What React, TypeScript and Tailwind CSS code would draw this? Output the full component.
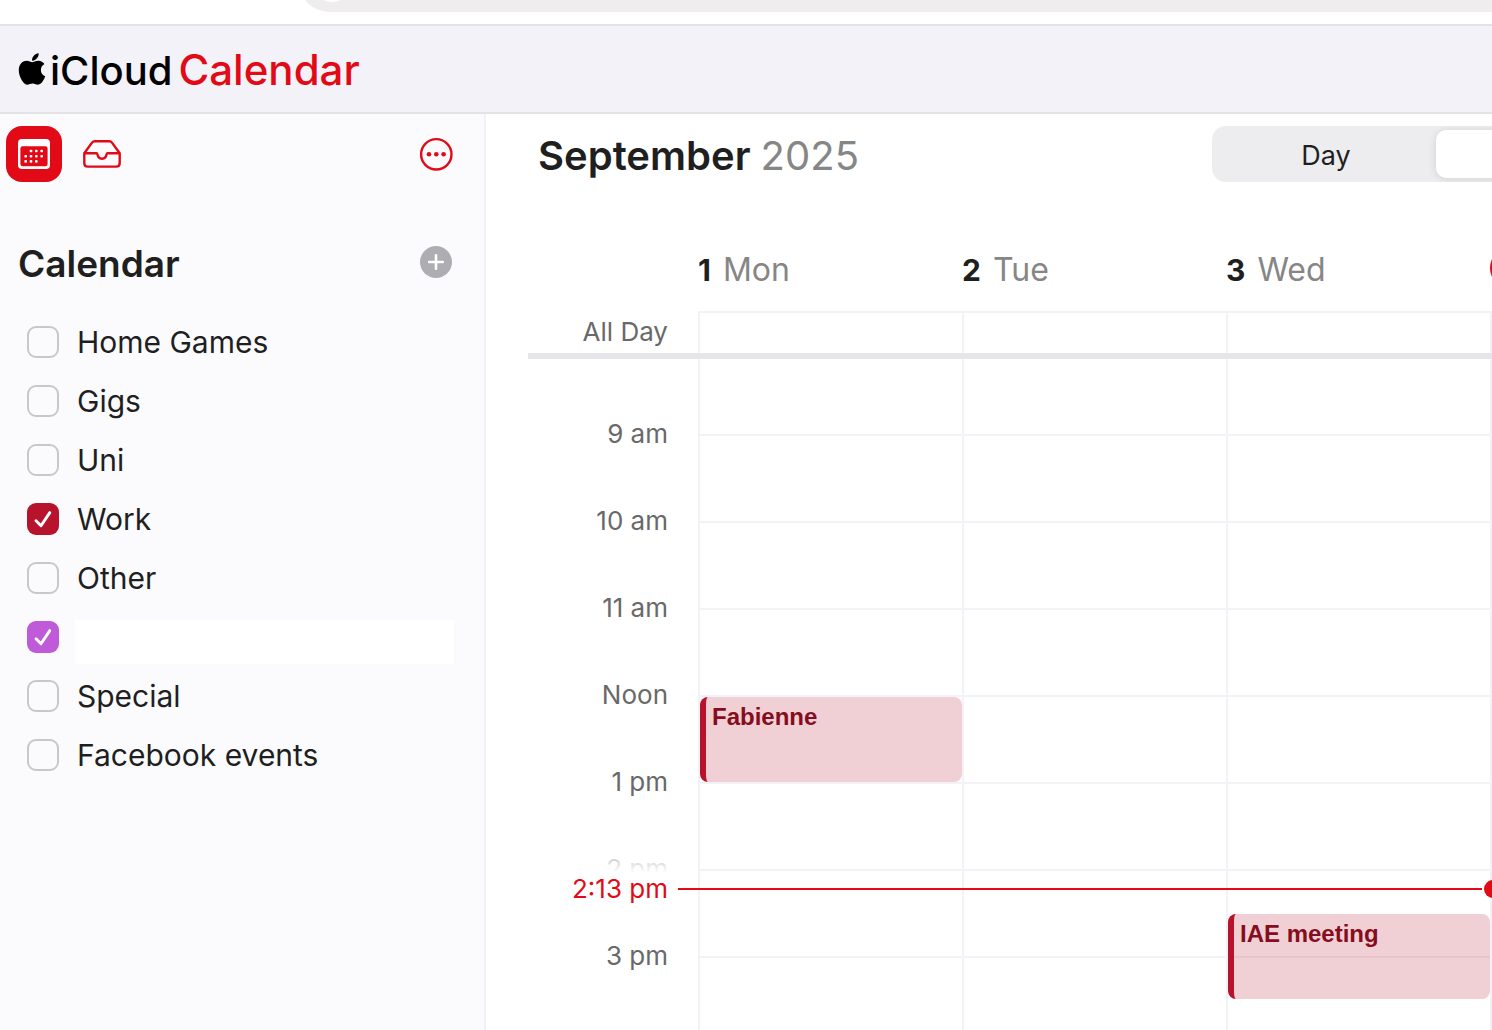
import { useState } from 'react'
import { FaApple } from 'react-icons/fa'

const HOUR_HEIGHT = 87
const FIRST_LINE = 75
const FIRST_HOUR = 9

const HOURS = ['9 am', '10 am', '11 am', 'Noon', '1 pm', '2 pm', '3 pm']

const CALENDARS = [
  { id: 'home-games', name: 'Home Games', checked: false, color: 'checked:bg-[#b8132d]' },
  { id: 'gigs', name: 'Gigs', checked: false, color: 'checked:bg-[#b8132d]' },
  { id: 'uni', name: 'Uni', checked: false, color: 'checked:bg-[#b8132d]' },
  { id: 'work', name: 'Work', checked: true, color: 'checked:bg-[#b8132d]' },
  { id: 'other', name: 'Other', checked: false, color: 'checked:bg-[#b8132d]' },
  { id: 'unnamed', name: '', checked: true, color: 'checked:bg-[#bf5ad8]' },
  { id: 'special', name: 'Special', checked: false, color: 'checked:bg-[#b8132d]' },
  { id: 'facebook', name: 'Facebook events', checked: false, color: 'checked:bg-[#b8132d]' },
]

const DAYS = [
  { date: 1, name: 'Mon', events: [{ title: 'Fabienne', start: 12, hours: 1 }] },
  { date: 2, name: 'Tue', events: [] },
  { date: 3, name: 'Wed', events: [{ title: 'IAE meeting', start: 14.5, hours: 1 }] },
]

const NOW = 14 + 13 / 60

const hourToY = (hour: number) => FIRST_LINE + (hour - FIRST_HOUR) * HOUR_HEIGHT

function CalendarIcon() {
  return (
    <svg width="32" height="30" viewBox="0 0 32 30" aria-hidden="true">
      <rect width="32" height="30" rx="4" fill="#fff" />
      <rect x="2.4" y="7.3" width="27.2" height="19.9" rx="2.2" fill="#e20a17" />
      <g fill="#fff">
        {[[13, 12], [18.3, 12], [23.7, 12], [7.7, 17.2], [13, 17.2], [18.3, 17.2], [23.7, 17.2], [7.7, 22.4], [13, 22.4], [18.3, 22.4]].map(([x, y]) => (
          <rect key={`${x}-${y}`} x={x - 1.3} y={y - 1.3} width="2.6" height="2.6" rx="0.8" />
        ))}
      </g>
    </svg>
  )
}

function InboxIcon() {
  return (
    <svg width="38" height="28" viewBox="0 0 38 28" fill="none" stroke="#e20a17" strokeWidth="2.4" strokeLinejoin="round" aria-hidden="true">
      <path d="M1.3 13.2 9 2.6C9.8 1.5 10.6 1.2 11.8 1.2H26.2C27.4 1.2 28.2 1.5 29 2.6L36.7 13.2V23.2C36.7 25.4 35.4 26.6 33.2 26.6H4.8C2.6 26.6 1.3 25.4 1.3 23.2Z" />
      <path d="M1.3 13.3H13.4C14 13.3 14.3 13.6 14.4 14.2C14.8 17 16.6 18.7 19 18.7S23.2 17 23.6 14.2C23.7 13.6 24 13.3 24.6 13.3H36.7" />
    </svg>
  )
}

function Sidebar() {
  const [calendars, setCalendars] = useState(CALENDARS)
  const toggle = (id: string) =>
    setCalendars(calendars.map((c) => (c.id === id ? { ...c, checked: !c.checked } : c)))

  return (
    <aside className="w-[486px] shrink-0 border-r-2 border-[#f2f2f6] bg-[#fbfbfe] pt-3">
      <div className="flex items-center gap-3 pl-1.5 pr-8">
        <button aria-label="Calendar" className="flex size-14 items-center justify-center rounded-2xl bg-[#e20a17]">
          <CalendarIcon />
        </button>
        <button aria-label="Inbox" className="flex size-14 items-center justify-center">
          <InboxIcon />
        </button>
        <button aria-label="More options" className="ml-auto">
          <svg width="32" height="32" viewBox="0 0 32 32" className="overflow-visible" aria-hidden="true">
            <circle cx="16.3" cy="16.3" r="15.2" fill="none" stroke="#e20a17" strokeWidth="2.4" />
            <g fill="#e20a17">
              <circle cx="9" cy="16.3" r="2.3" />
              <circle cx="16.3" cy="16.3" r="2.3" />
              <circle cx="23.6" cy="16.3" r="2.3" />
            </g>
          </svg>
        </button>
      </div>
      <div className="mt-16 flex h-8 items-center justify-between pl-[18px] pr-8">
        <h2 className="pt-1 text-[37px] font-semibold leading-8 text-[#1f1f1f]">Calendar</h2>
        <button aria-label="Add calendar">
          <svg width="32" height="32" viewBox="0 0 32 32" aria-hidden="true">
            <circle cx="16" cy="16" r="16" fill="#aeaeb2" />
            <path d="M16 9.2V22.8M9.2 16H22.8" stroke="#fff" strokeWidth="2.6" strokeLinecap="round" />
          </svg>
        </button>
      </div>
      <ul className="pl-[27px] pr-[30px] pt-[34px]">
        {calendars.map((c) => (
          <li key={c.id} className="flex h-[59px] items-center">
            <span className="relative size-8 shrink-0">
              <input id={c.id} type="checkbox" checked={c.checked} onChange={() => toggle(c.id)} aria-label={c.name || 'Calendar'}
                className={`size-8 appearance-none rounded-[9px] border-2 border-[#c8c8cb] checked:border-0 ${c.color}`} />
              {c.checked && (
                <svg viewBox="0 0 32 32" className="pointer-events-none absolute inset-0" fill="none" stroke="#fff" strokeWidth="2.9" strokeLinecap="round" strokeLinejoin="round" aria-hidden="true">
                  <path d="M9 17.8 14 22.8 22.8 9.6" />
                </svg>
              )}
            </span>
            {c.name ? (
              <label htmlFor={c.id} className="pl-[18px] pt-0.5 text-[30px] text-[#1f1f1f]">{c.name}</label>
            ) : (
              <label htmlFor={c.id} className="mb-0.5 ml-4 h-11 flex-1 self-end bg-white" />
            )}
          </li>
        ))}
      </ul>
    </aside>
  )
}

function WeekGrid() {
  return (
    <div className="flex min-h-0 flex-1 flex-col pl-[42px] pt-10">
      <div className="grid grid-cols-[170px_1fr_1fr_1fr_2px]">
        <div />
        {DAYS.map((day) => (
          <div key={day.date} className="flex h-[85px] items-baseline gap-3 pt-[19px] text-[32px] leading-[50px] text-[#868686]">
            <span className="text-[30px] font-bold text-[#1f1f1f]">{day.date}</span>
            {day.name}
          </div>
        ))}
        <div className="relative">
          <span className="absolute left-0 top-[22px] size-10 rounded-full bg-[#e20a17]" />
        </div>
      </div>
      <div className="grid h-[42px] grid-cols-[170px_1fr_1fr_1fr_2px] text-[26px] leading-[42px]">
        <div className="pr-[30px] text-right text-[#696969]">All Day</div>
        {DAYS.map((day) => (
          <div key={day.date} className="border-l-2 border-t-2 border-[#f2f2f7]" />
        ))}
        <div className="bg-[#f2f2f7]" />
      </div>
      <div className="h-1.5 shrink-0 bg-[#e5e5ea]" />
      <div className="relative grid min-h-0 flex-1 grid-cols-[170px_1fr_1fr_1fr_2px] overflow-hidden">
        <div className="pr-[30px] pt-[31px] text-right text-[26px] text-[#696969]">
          {HOURS.map((hour) => (
            <div key={hour} className="h-[87px] leading-[87px]">{hour}</div>
          ))}
        </div>
        {DAYS.map((day) => (
          <div key={day.date} className="relative border-l-2 border-[#f2f2f7] pt-[75px]">
            {HOURS.map((hour) => (
              <div key={hour} className="h-[87px] border-t-2 border-[#f2f2f7]" />
            ))}
            {day.events.map((event) => (
              <button key={event.title}
                className="absolute inset-x-0 flex items-start overflow-hidden rounded-lg border-l-[6px] border-[#b8132d] bg-[#b8132d]/20 bg-clip-padding px-1.5 pt-1 text-left font-['Liberation_Sans',sans-serif] text-2xl font-bold text-[#860c20]"
                style={{ top: Math.floor(hourToY(event.start)) + 2, height: event.hours * HOUR_HEIGHT - 2 }}>
                {event.title}
              </button>
            ))}
          </div>
        ))}
        <div className="bg-[#f2f2f7]" />
        <div className="absolute inset-x-0 flex h-0.5 items-center" style={{ top: Math.round(hourToY(NOW)) }}>
          <div className="w-[140px] shrink-0 bg-linear-to-b from-white/65 from-0% via-white via-25% to-white py-4 text-right text-[26px] leading-8 text-[#e20a17]">2:13 pm</div>
          <div className="ml-2.5 h-0.5 flex-1 bg-[#e20a17]" />
          <div className="-mr-2.5 ml-0.5 size-[18px] shrink-0 rounded-full bg-[#e20a17]" />
        </div>
      </div>
    </div>
  )
}

export default function App() {
  return (
    <div className="flex h-screen flex-col overflow-hidden bg-white font-[Inter,'Liberation_Sans',sans-serif]">
      <div className="flex h-6 shrink-0 items-end overflow-hidden pb-3 pl-[298px]">
        <div className="flex h-16 flex-1 items-center rounded-l-full bg-[#efedee] pl-3">
          <span className="size-11 rounded-full bg-white" />
        </div>
      </div>
      <header className="flex h-[90px] shrink-0 items-center border-y-2 border-[#e3e3e6] bg-[#f3f2f8] pl-3.5">
        <a href="#" className="flex items-center font-medium text-black">
          <FaApple className="size-9" aria-hidden="true" />
          <span className="flex items-baseline gap-1.5">
            <span className="text-[40px]">iCloud</span>
            <span className="text-[42px] text-[#e20a17]">Calendar</span>
          </span>
        </a>
      </header>
      <div className="flex min-h-0 flex-1">
        <Sidebar />
        <main className="flex min-w-0 flex-1 flex-col overflow-hidden">
          <div className="flex justify-between pl-[52px] pt-3">
            <h1 className="text-[40px] font-semibold leading-[60px] text-[#1f1f1f]">
              September <span className="font-normal text-[#868686]">2025</span>
            </h1>
            <div className="flex h-14 w-[280px] overflow-hidden rounded-l-[14px] bg-[#ededef] text-[27px] text-[#1f1f1f]">
              <button className="w-[224px] shrink-0 pl-1 pt-1">Day</button>
              <button aria-label="Week" className="my-1 w-[224px] shrink-0 rounded-[10px] bg-white shadow-[0_1px_8px_rgba(0,0,0,0.12)]" />
            </div>
          </div>
          <WeekGrid />
        </main>
      </div>
    </div>
  )
}
